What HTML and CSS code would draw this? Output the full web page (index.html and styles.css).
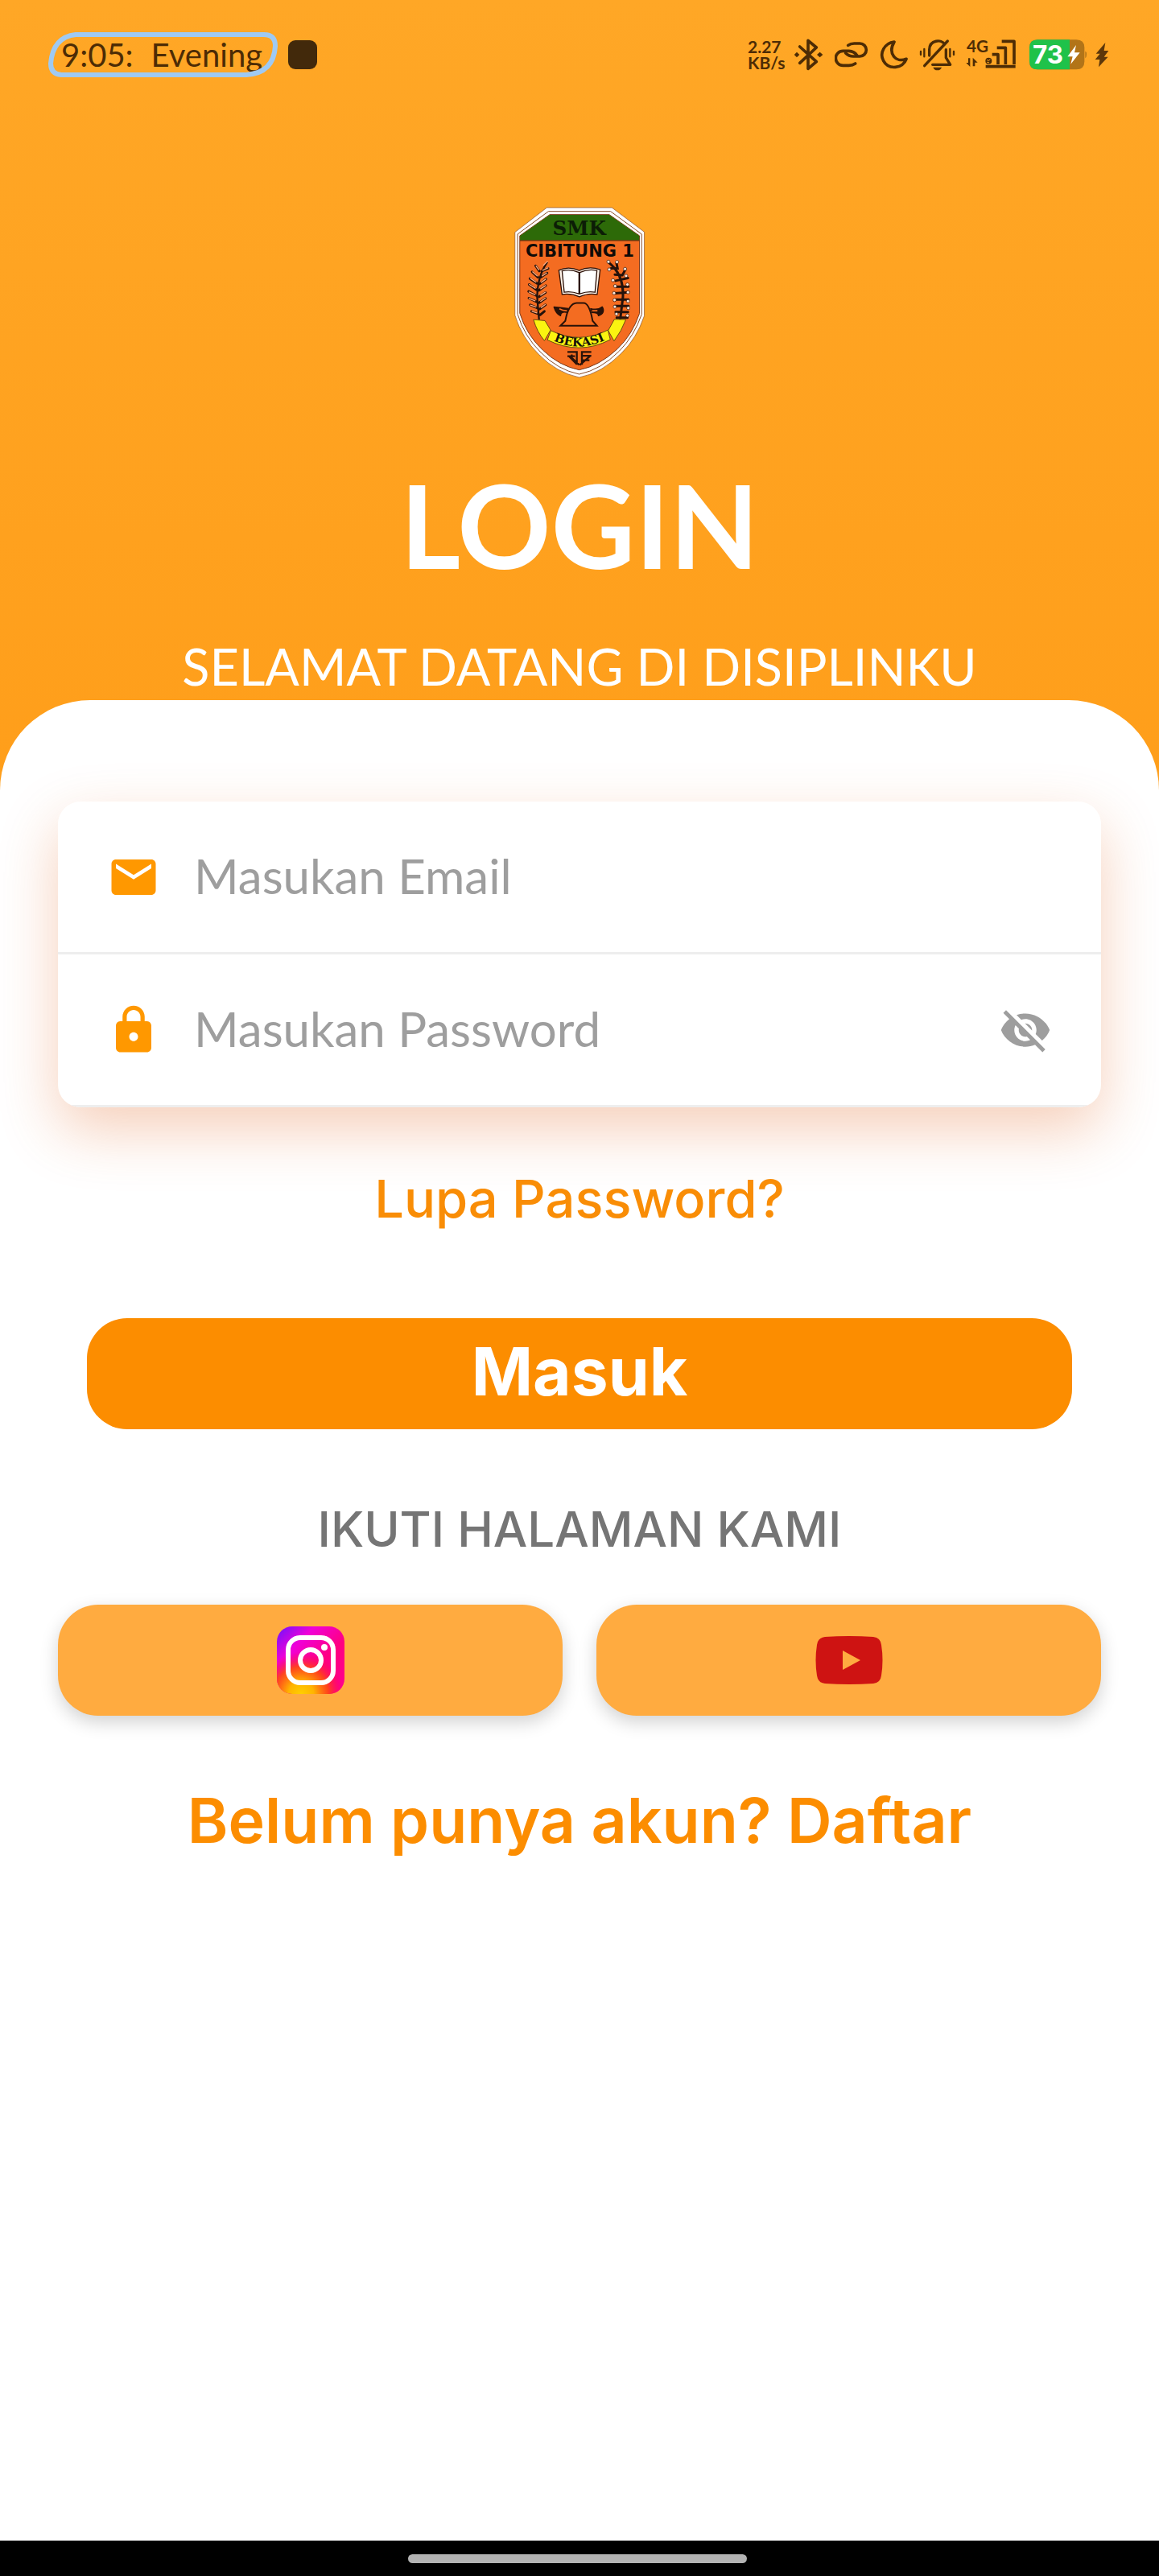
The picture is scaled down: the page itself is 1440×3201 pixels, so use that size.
FILE: index.html
```html
<!DOCTYPE html>
<html lang="id">
<head>
<meta charset="utf-8">
<meta name="viewport" content="width=device-width, initial-scale=1">
<title>Login - Disiplinku</title>
<link rel="stylesheet" href="styles.css">
</head>
<body>
<div class="page">
  <div class="status-bar">
    <div class="status-left">
      <div class="clock">
        <svg class="clock-ring" viewBox="0 0 285 55" preserveAspectRatio="none" aria-hidden="true"><path d="M34 3H268Q282 3 282 17Q280 50 246 52H16Q3 51 3 38Q6 6 34 3Z" fill="none" stroke="#9fcaf3" stroke-width="6"/></svg>
        <span>9:05:</span><span>Evening</span>
      </div>
      <span class="stop"></span>
    </div>
    <div class="status-right">
      <div class="net"><span>2.27</span><span>KB/s</span></div>
      <svg width="40" height="54" viewBox="237 66 120 162" aria-hidden="true"><path d="M257 117L319 173L288 199V94L319 120L257 178" fill="none" stroke="#4d2c05" stroke-width="11" stroke-linejoin="round" stroke-linecap="round"/><path d="M236 147l10-10 10 10-10 10zM321 147l11-10 11 10-11 10z" fill="#4d2c05"/></svg>
      <svg width="46" height="54" viewBox="387 66 138 162" aria-hidden="true"><g fill="none" stroke="#4d2c05" stroke-width="11" stroke-linecap="round"><path d="M437 112Q446 105 460 105H481A24 24 0 0 1 481 153H456Q440 153 428 141"/><path d="M464 180Q454 187 440 187H418A27 27 0 0 1 418 133H440Q460 134 470 149"/></g></svg>
      <svg width="37" height="54" viewBox="555 66 111 162" aria-hidden="true"><path d="M609 99C572 104 553 141 569 170C588 205 642 199 654 163C615 178 584 143 609 99Z" fill="none" stroke="#4d2c05" stroke-width="11" stroke-linejoin="round"/></svg>
      <svg width="50" height="54" viewBox="696 66 150 162" aria-hidden="true"><g fill="none" stroke="#4d2c05" stroke-width="10" stroke-linecap="round" stroke-linejoin="round"><path d="M740 150V128C741 91 786 88 797 109M802 128V158L818 184H752M808 96L722 188"/><path d="M708 135v12M721 126v28M817 126v28M831 135v12" stroke-width="7"/></g><path d="M754 194h32q-4 11-16 11t-16-11z" fill="#4d2c05"/></svg>
      <svg width="68" height="54" viewBox="876 66 204 162" aria-hidden="true"><text x="879" y="139" font-size="62" class="net-type">4G</text><g fill="none" stroke="#4d2c05" stroke-width="11" stroke-linejoin="round"><path d="M1010 97H1056V183M992 121H1024V183M974 146H996V183M950 191H1061"/></g><circle cx="961" cy="170" r="12" fill="#4d2c05"/><path d="M954 165l5 5 8-6M955 175l8 2" fill="none" stroke="#ffa726" stroke-width="3"/><path d="M885 160h7v32l-15-15h8zM902 190V158l18 18h-10v14z" fill="#4d2c05"/></svg>
      <svg width="72" height="54" viewBox="1110 66 216 162" aria-hidden="true"><path d="M1143 91H1288Q1318 91 1318 121V172Q1318 202 1288 202H1143Q1113 202 1113 172V121Q1113 91 1143 91Z" fill="#b27418"/><path d="M1143 91H1263V202H1143Q1113 202 1113 172V121Q1113 91 1143 91Z" fill="#1fc24a"/><path d="M1321 134q7 4 5 13 0 9-5 13z" fill="#b27418"/><text x="1125" y="180" font-size="94" class="battery-level">73</text><path d="M1287 111L1255 154H1274L1267 182L1301 139H1281Z" fill="#fff"/></svg>
      <svg width="20" height="54" viewBox="1356 66 60 162" aria-hidden="true"><path d="M1396 102L1361 143H1376L1358 165H1375L1371 193L1406 155H1391L1408 132H1391Z" fill="#5d370a"/></svg>
    </div>
  </div>

  <header class="hero">
    <svg class="crest" viewBox="60 52 486 640" role="img" aria-label="SMK Cibitung 1 Bekasi">
      <path d="M181 55H424L545 146V459Q516 544 459 599Q386 673 302 689Q217 671 152 604Q88 542 62 457V147Z" fill="#fff" stroke="#8a4a26" stroke-width="2"/>
      <path d="M187 69H419L535 154V454Q506 536 452 590Q382 661 302 677Q222 661 159 596Q97 536 72 453V154Z" fill="#fff" stroke="#8a4a26" stroke-width="3"/>
      <path d="M192 81H414L527 160V450Q500 530 444 583Q377 646 302 661Q227 646 166 587Q105 530 80 449V160Z" fill="#f46c21" stroke="#7a3a1c" stroke-width="3"/>
      <path d="M192 82H414L526 160V177H81V160Z" fill="#2d6a08"/>
      <path d="M81 178H526" stroke="#3d230c" stroke-width="3"/>
      <text x="302" y="157" text-anchor="middle" font-size="74" class="crest-serif" fill="#0c1d06">SMK</text>
      <text x="304" y="239" text-anchor="middle" font-size="63" class="crest-sans" fill="#100b08">CIBITUNG 1</text>
      <path d="M226 289Q262 272 302 290Q340 272 380 287L369 379Q330 374 303 388Q272 374 238 379Z" fill="#fff4ea" stroke="#2c1209" stroke-width="4"/>
      <path d="M238 291Q270 283 301 297V377Q270 366 246 371ZM368 290Q336 283 304 297V377Q334 366 361 371Z" fill="#fff" stroke="#2c1209" stroke-width="4"/>
      <path d="M232 496L250 478Q262 412 292 411H318Q340 411 352 478L368 496Z" fill="#f46c21" stroke="#2a1208" stroke-width="6"/>
      <path d="M262 432Q230 428 208 426Q216 452 232 458Q232 440 258 446M343 432Q372 440 388 426Q400 448 374 458Q374 446 348 446" fill="#2a1208" stroke="#2a1208" stroke-width="5" stroke-linejoin="round"/>
      <path d="M228 433Q240 440 256 440M350 440H370" fill="none" stroke="#f46c21" stroke-width="5"/>
      <path d="M183 258Q146 310 145 390L152 474" fill="none" stroke="#25120b" stroke-width="7"/>
      <path d="M153 292l-14-20M148 315l-22-20M145 338l-27-18M143 362l-28-20M143 384l-30-16M144 407l-30-14M147 430l-28-12M150 452l-26-10M162 292l24-10M158 315l24-16M154 340l24-18M152 364l25-18M152 388l24-16M152 410l24-16M154 434l22-16M156 456l16-14" stroke="#25120b" stroke-width="9" stroke-linecap="round"/>
      <path d="M183 256l-14 14M151 287l-10-14M145 310l-17-15M140 333l-20-14M138 356l-22-14M137 380l-22-10M137 403l-22-9M140 426l-20-7M144 448l-18-6M166 289l19-9M164 310l16-11M160 334l17-12M158 358l18-12M158 382l17-11M158 405l17-12M160 428l15-11" stroke="#ffad82" stroke-width="4" stroke-linecap="round"/>
      <path d="M410 258Q470 305 465 390L455 472M421 282h24l-4-20M435 305l28 2 12-22M438 328l46-10M440 350h46M434 375l52-4M438 398h48M436 422h50M438 445h46M442 466h40" fill="none" stroke="#25120b" stroke-width="9" stroke-linecap="round"/>
      <g fill="#ffe9dc" stroke="#25120b" stroke-width="2"><circle cx="411" cy="257" r="6"/><circle cx="443" cy="258" r="6"/><circle cx="414" cy="286" r="6"/><circle cx="473" cy="284" r="6"/><circle cx="428" cy="326" r="6"/><circle cx="477" cy="310" r="6"/><circle cx="436" cy="348" r="6"/><circle cx="482" cy="342" r="6"/><circle cx="432" cy="374" r="6"/><circle cx="484" cy="371" r="6"/><circle cx="434" cy="400" r="6"/><circle cx="484" cy="404" r="6"/><circle cx="435" cy="425" r="6"/><circle cx="485" cy="430" r="6"/><circle cx="441" cy="452" r="6"/><circle cx="482" cy="458" r="6"/></g>
      <path d="M131 473L174 477L195 512L172 552Q145 520 131 473ZM476 473L433 472L410 514L432 553Q460 516 476 473Z" fill="#fbf410" stroke="#6b4a10" stroke-width="3"/>
      <path d="M196 514Q302 566 409 512L418 548Q302 608 183 549Z" fill="#fbf410" stroke="#6b4a10" stroke-width="3"/>
      <path id="ribbon" d="M188 543Q302 604 416 541" fill="none"/>
      <text font-size="45" class="crest-serif" fill="#17120a"><textPath href="#ribbon" startOffset="50%" text-anchor="middle">BEKASI</textPath></text>
      <path d="M258 594H293V642M264 610L293 640M274 603V616L302 642M286 610H258M347 594H312V642M347 608H312M340 625H312M342 610L304 643" fill="none" stroke="#2a1208" stroke-width="7"/>
    </svg>
    <h1>LOGIN</h1>
    <p class="welcome">SELAMAT DATANG DI DISIPLINKU</p>
  </header>

  <main class="sheet">
    <form class="login">
      <div class="fields">
        <div class="field">
          <label for="email" aria-label="Email"><svg width="66" height="66" viewBox="0 0 24 24" fill="#ff9800" aria-hidden="true"><path d="M20 4H4c-1.100 0-1.990.9-1.990 2L2 18c0 1.100.9 2 2 2h16c1.100 0 2-.9 2-2V6c0-1.100-.9-2-2-2zm0 4l-8 5-8-5V6l8 5 8-5v2z"/></svg></label>
          <input id="email" type="email" placeholder="Masukan Email">
        </div>
        <div class="field">
          <label for="password" aria-label="Password"><svg width="66" height="66" viewBox="0 0 24 24" fill="#ff9800" aria-hidden="true"><path d="M18 8h-1V6c0-2.760-2.240-5-5-5S7 3.240 7 6v2H6c-1.100 0-2 .9-2 2v10c0 1.100.9 2 2 2h12c1.100 0 2-.9 2-2V10c0-1.100-.9-2-2-2zm-6 9c-1.100 0-2-.9-2-2s.9-2 2-2 2 .9 2 2-.9 2-2 2zm3.100-9H8.900V6c0-1.710 1.390-3.100 3.100-3.100s3.100 1.390 3.100 3.100v2z"/></svg></label>
          <input id="password" type="password" placeholder="Masukan Password">
          <button class="reveal" type="button" aria-label="Tampilkan password"><svg width="66" height="66" viewBox="0 0 24 24" fill="#9e9e9e" aria-hidden="true"><path d="M12 7c2.760 0 5 2.240 5 5 0 .65-.13 1.260-.36 1.830l2.920 2.920c1.510-1.260 2.700-2.890 3.430-4.750-1.730-4.390-6-7.500-11-7.500-1.400 0-2.740.25-3.980.7l2.160 2.160C10.740 7.130 11.350 7 12 7zM2 4.270l2.280 2.280.46.46C3.080 8.300 1.780 10.020 1 12c1.730 4.390 6 7.500 11 7.500 1.550 0 3.030-.3 4.380-.84l.42.42L19.730 22 21 20.730 3.270 3 2 4.270zM7.530 9.800l1.550 1.550c-.05.21-.08.43-.08.65 0 1.660 1.340 3 3 3 .22 0 .44-.03.65-.08l1.550 1.550c-.67.33-1.410.53-2.200.53-2.760 0-5-2.240-5-5 0-.79.2-1.530.53-2.200zm4.310-.78l3.150 3.150.02-.16c0-1.660-1.340-3-3-3l-.17.01z"/></svg></button>
        </div>
      </div>
      <a class="forgot" href="#lupa">Lupa Password?</a>
      <button class="submit" type="submit">Masuk</button>
    </form>
    <p class="follow">IKUTI HALAMAN KAMI</p>
    <div class="socials">
      <a class="social" href="#instagram" aria-label="Instagram">
        <svg width="84" height="84" viewBox="0 0 84 84" aria-hidden="true">
          <defs>
            <linearGradient id="ig-base" x1="0" y1="0" x2="1" y2="1"><stop offset="0" stop-color="#6a12ff"/><stop offset=".28" stop-color="#f000d8"/><stop offset=".6" stop-color="#ff0080"/><stop offset="1" stop-color="#ff0090"/></linearGradient>
            <radialGradient id="ig-warm" cx=".36" cy="1" r=".62"><stop offset="0" stop-color="#ffcf00"/><stop offset=".3" stop-color="#ffb400"/><stop offset=".65" stop-color="#ff4a10" stop-opacity=".9"/><stop offset="1" stop-color="#ff0050" stop-opacity="0"/></radialGradient>
          </defs>
          <rect width="84" height="84" rx="19" fill="url(#ig-base)"/><rect width="84" height="84" rx="19" fill="url(#ig-warm)"/>
          <rect x="14" y="14" width="56" height="56" rx="15" fill="none" stroke="#fff" stroke-width="6"/><circle cx="42" cy="42" r="13" fill="none" stroke="#fff" stroke-width="6"/><circle cx="59" cy="26" r="4" fill="#fff"/>
        </svg>
      </a>
      <a class="social" href="#youtube" aria-label="YouTube">
        <svg width="84" height="60" viewBox="0 0 84 60" aria-hidden="true"><path fill="#ce1312" fill-rule="evenodd" d="M12 1Q42-1 72 1Q81 2 82 11Q85 30 82 49Q81 58 72 59Q42 61 12 59Q3 58 2 49Q-1 30 2 11Q3 2 12 1ZM34 18V42L56 30Z"/></svg>
      </a>
    </div>
    <a class="register" href="#daftar">Belum punya akun? Daftar</a>
  </main>

  <div class="nav-bar"><span class="nav-pill"></span></div>
</div>
</body>
</html>
```
FILE: styles.css
```css
* { box-sizing: border-box; }

body {
  margin: 0;
  font-family: Lato, "Noto Sans", sans-serif;
  background: #fff;
}

.page {
  min-height: 100vh;
  display: flex;
  flex-direction: column;
  background: linear-gradient(#ffa726, #ff9e1a 1000px);
}

/* phone status bar */
.status-bar {
  display: flex;
  justify-content: space-between;
  align-items: center;
  padding: 40px 60px 0 60px;
  height: 96px;
  color: #4d2c05;
}
.status-left, .status-right, .clock { display: flex; align-items: center; }
.status-left { gap: 13px; }
.status-right { gap: 10px; }
.clock {
  position: relative;
  width: 285px;
  height: 56px;
  padding-left: 16px;
  gap: 22px;
  font-size: 40px;
  line-height: 48px;
}
.clock-ring { position: absolute; inset: 0; width: 100%; height: 100%; }
.stop { width: 36px; height: 36px; border-radius: 9px; background: #42290b; }
.net {
  display: flex;
  flex-direction: column;
  width: 48px;
  font: 700 21px/20px Lato, sans-serif;
}
.net-type { font-family: Lato, sans-serif; font-weight: 700; fill: #4d2c05; }
.battery-level { font-family: Inter, sans-serif; font-weight: 700; fill: #fff; }

/* header */
.hero {
  display: flex;
  flex-direction: column;
  align-items: center;
  padding-top: 161px;
  color: #fff;
}
.crest { width: 162px; height: 213px; }
.crest-serif { font-family: "DejaVu Serif", serif; font-weight: 700; }
.crest-sans { font-family: "DejaVu Sans", sans-serif; font-weight: 700; }
h1 {
  margin: 92px 0 0;
  font-size: 144px;
  line-height: 180px;
  font-weight: 700;
}
.welcome {
  margin: 48px 0 4px;
  font-size: 63px;
  line-height: 76px;
}

/* form sheet */
.sheet {
  flex: 1;
  display: flex;
  flex-direction: column;
  align-items: center;
  padding: 126px 72px 96px;
  background: #fff;
  border-radius: 112px 112px 0 0;
}
.login {
  width: 100%;
  display: flex;
  flex-direction: column;
  align-items: center;
}
.fields {
  width: 100%;
  background: #fff;
  border-radius: 28px;
  overflow: hidden;
  box-shadow: 0 28px 72px rgba(225, 95, 27, .3);
}
.field {
  display: flex;
  align-items: center;
  height: 190px;
  padding: 0 61px;
  border-bottom: 3px solid #eee;
}
.field label { display: flex; }
.field input {
  flex: 1;
  min-width: 0;
  margin-left: 42px;
  padding: 0 0 4px;
  border: 0;
  outline: 0;
  background: none;
  font: 400 60px/72px Lato, sans-serif;
  color: #333;
}
.field input::placeholder { color: #9e9e9e; opacity: 1; }
.reveal { display: flex; padding: 0; border: 0; background: none; }

a { text-decoration: none; }
.forgot, .submit, .follow, .register { font-family: Inter, "Open Sans", sans-serif; }
.forgot {
  margin-top: 74px;
  font-size: 65px;
  line-height: 80px;
  font-weight: 500;
  color: #f98d06;
}
.submit {
  align-self: stretch;
  height: 138px;
  margin: 108px 36px 0;
  padding: 0 0 4px;
  border: 0;
  border-radius: 50px;
  background: #fc8d00;
  color: #fff;
  font-size: 82px;
  line-height: 96px;
  font-weight: 700;
}
.follow {
  margin: 84px 0 0;
  font-size: 60px;
  line-height: 80px;
  font-weight: 500;
  color: #757575;
}
.socials {
  align-self: stretch;
  display: grid;
  grid-template-columns: 1fr 1fr;
  gap: 42px;
  margin-top: 54px;
}
.social {
  display: flex;
  align-items: center;
  justify-content: center;
  height: 138px;
  border-radius: 50px;
  background: #ffab40;
  box-shadow: 0 8px 22px rgba(0, 0, 0, .18);
}
.register {
  margin-top: 82px;
  font-size: 77px;
  line-height: 96px;
  font-weight: 600;
  color: #fc8d00;
}

/* gesture bar */
.nav-bar {
  display: flex;
  justify-content: center;
  align-items: center;
  height: 44px;
  padding-right: 6px;
  background: #000;
}
.nav-pill { width: 421px; height: 11px; border-radius: 6px; background: #b3b3b3; }
```
